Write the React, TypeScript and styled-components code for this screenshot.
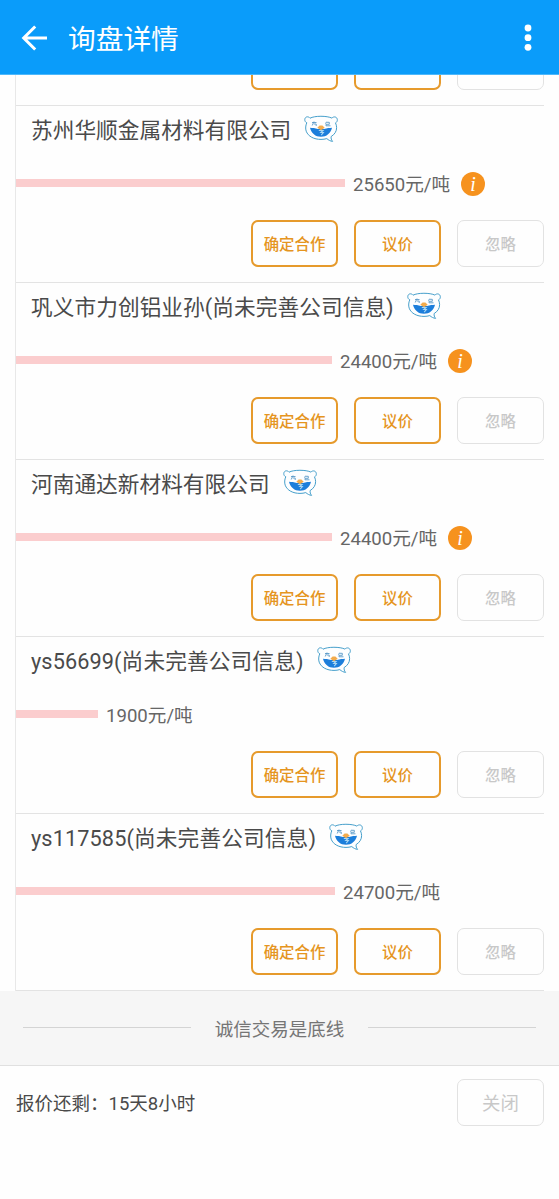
import React from 'react';
import styled, { createGlobalStyle } from 'styled-components';

const GlobalStyle = createGlobalStyle`
  * { box-sizing: border-box; }
  body {
    margin: 0;
    background: #fefefe;
    font-family: Roboto, "Noto Sans CJK SC", sans-serif;
    color: #4a4a4a;
  }
`;

const Page = styled.div`
  width: 559px;
  height: 1199px;
  overflow: hidden;
  display: flex;
  flex-direction: column;
`;

const Header = styled.header`
  flex: none;
  height: 75px;
  background: #0a9cfa;
  border-bottom: 1px solid #4db8fb;
  display: flex;
  align-items: center;
  padding: 2px 22px 0 21px;
  color: #fff;
`;

const Title = styled.h1`
  flex: 1;
  margin: 4px 0 0 20px;
  font-size: 27.7px;
  line-height: 40px;
  font-weight: 400;
`;

const List = styled.main`
  flex: none;
  margin: 0 15px;
  border-left: 1px solid #e8e8e8;
`;

const Row = styled.section<{ $clipped?: boolean }>`
  height: ${p => (p.$clipped ? 31 : 177)}px;
  overflow: hidden;
  display: flex;
  flex-direction: column;
  justify-content: flex-end;
  border-bottom: 1px solid #e3e3e3;
`;

const Company = styled.div<{ $tracking: number }>`
  height: 49px;
  padding-left: 15px;
  display: flex;
  align-items: center;
  font-size: 21.7px;
  line-height: 30px;
  letter-spacing: ${p => p.$tracking}px;
  white-space: nowrap;

  svg { margin: -4px 0 0 13px; }
`;

const Price = styled.div`
  height: 28px;
  margin: 16px 0 21px;
  display: flex;
  align-items: center;
  font-size: 18.6px;
  line-height: 28px;
  color: #666;
  white-space: nowrap;
`;

const Bar = styled.div`
  height: 8px;
  margin: -5px 8px 0 0;
  background: #fbcdce;
`;

const Info = styled.span`
  width: 24px;
  height: 24px;
  margin: -3px 0 0 11px;
  border-radius: 50%;
  background: #f6921e;
  color: #fff;
  font: italic 20px/24px "Liberation Serif", serif;
  text-align: center;
`;

const Actions = styled.div`
  flex: none;
  display: flex;
  justify-content: flex-end;
  gap: 16px;
  padding-bottom: 15px;
`;

const Button = styled.button<{ $muted?: boolean; $large?: boolean }>`
  flex: none;
  width: 87px;
  height: 47px;
  padding: 0 0 1px;
  border: ${p => (p.$muted ? '1px solid #e2e2e2' : '2px solid #e69a2c')};
  border-radius: 7px;
  background: transparent;
  color: ${p => (p.$muted ? '#c8c8c8' : '#e5951f')};
  font-family: inherit;
  font-size: ${p => (p.$large ? 18.4 : 15.4)}px;
  font-weight: ${p => (p.$large ? 400 : 500)};
`;

const Motto = styled.div`
  flex: none;
  height: 75px;
  padding: 0 23px;
  display: flex;
  align-items: center;
  gap: 24px;
  background: #f6f6f6;
  border-bottom: 1px solid #e0e0e0;
  font-size: 18.5px;
  color: #757575;
`;

const Rule = styled.span`
  flex: 1;
  height: 1px;
  margin-top: -2px;
  background: #d4d4d4;
`;

const Footer = styled.footer`
  display: flex;
  align-items: center;
  justify-content: space-between;
  padding: 13px 15px 0 16px;
`;

const Remaining = styled.p`
  margin: 0 0 2px;
  font-size: 18.5px;
`;

const BackIcon = () => (
  <svg width="27" height="26" viewBox="0 0 27 26" fill="none" stroke="#fff" strokeWidth="3">
    <path d="M26 13H3M14.2 1.5 2.7 13l11.5 11.5" />
  </svg>
);

const MoreIcon = () => (
  <svg width="18" height="28" viewBox="0 0 18 28" fill="#fff">
    <circle cx="9" cy="4" r="3.4" />
    <circle cx="9" cy="13.7" r="3.4" />
    <circle cx="9" cy="23.3" r="3.4" />
  </svg>
);

const BearIcon = () => (
  <svg width="34" height="28" viewBox="0 0 34 28" fill="none">
    <path
      d="M6 3.2C4.2.8 1 1.7.8 4.4c-.1 1.8.8 2.9 2 3.4C1.6 10.400 1.300 13.500 2.200 16.200c2 5.300 7.800 8.200 14.800 8.200 2.100 0 4-.3 5.800-.8 1.700 1.500 3.700 2.600 5.800 2.800-1.200-1.500-1.700-3-1.500-4.800 3.700-2.300 5.500-5.300 5.500-8.900 0-1.700-.4-3.300-1.100-4.800 1.200-.6 2-1.700 1.800-3.400-.3-2.700-3.400-3.500-5.400-1.400C23.200.7 10.600.6 6 3.200Z"
      fill="#fdfeff" stroke="#459fcb" strokeWidth="1"
    />
    <path d="M8 7.500h4.500M10 6.500 8.200 10.500M9.800 9h2.400v2M22.500 6.800l-1 2M22.500 7.300h2.800v2h-3.300v1.500h4.500" stroke="#5a9ac8" strokeWidth=".9" />
    <path d="M6 12.800c2.500.1 5 .5 8 1.100h6c3-.6 5.500-1 8-1.100-1.300 5.600-5.500 9-11 9S7.300 18.400 6 12.800Z" fill="#1c7edb" />
    <path d="m13.300 12.800 2.300-2.300h2.800l2.300 2.300-3.700 2.400Z" fill="#f2ab4c" />
    <path d="M14.800 15.500h4.200l-2.200 2h2.600l-2.200 2.700" stroke="#a8d6f2" strokeWidth="1.100" />
  </svg>
);

/* Labels are left out when only the lower edge of the buttons is in view. */
const RowActions = ({ labels = true }: { labels?: boolean }) => (
  <Actions>
    <Button>{labels && '确定合作'}</Button>
    <Button>{labels && '议价'}</Button>
    <Button $muted>{labels && '忽略'}</Button>
  </Actions>
);

const quotes = [
  { company: '苏州华顺金属材料有限公司', price: 25650, bar: 329, info: true, tracking: 0 },
  { company: '巩义市力创铝业孙(尚未完善公司信息)', price: 24400, bar: 316, info: true, tracking: 0.04 },
  { company: '河南通达新材料有限公司', price: 24400, bar: 316, info: true, tracking: 0 },
  { company: 'ys56699(尚未完善公司信息)', price: 1900, bar: 82, info: false, tracking: 0.1 },
  { company: 'ys117585(尚未完善公司信息)', price: 24700, bar: 319, info: false, tracking: 0.11 },
];

export default function App() {
  return (
    <Page>
      <GlobalStyle />
      <Header>
        <BackIcon />
        <Title>询盘详情</Title>
        <MoreIcon />
      </Header>
      <List>
        <Row $clipped><RowActions labels={false} /></Row>
        {quotes.map(q => (
          <Row key={q.company}>
            <Company $tracking={q.tracking}>{q.company}<BearIcon /></Company>
            <Price>
              <Bar style={{ width: q.bar }} />
              {q.price}元/吨
              {q.info && <Info>i</Info>}
            </Price>
            <RowActions />
          </Row>
        ))}
      </List>
      <Motto><Rule />诚信交易是底线<Rule /></Motto>
      <Footer>
        <Remaining>报价还剩：15天8小时</Remaining>
        <Button $muted $large>关闭</Button>
      </Footer>
    </Page>
  );
}
